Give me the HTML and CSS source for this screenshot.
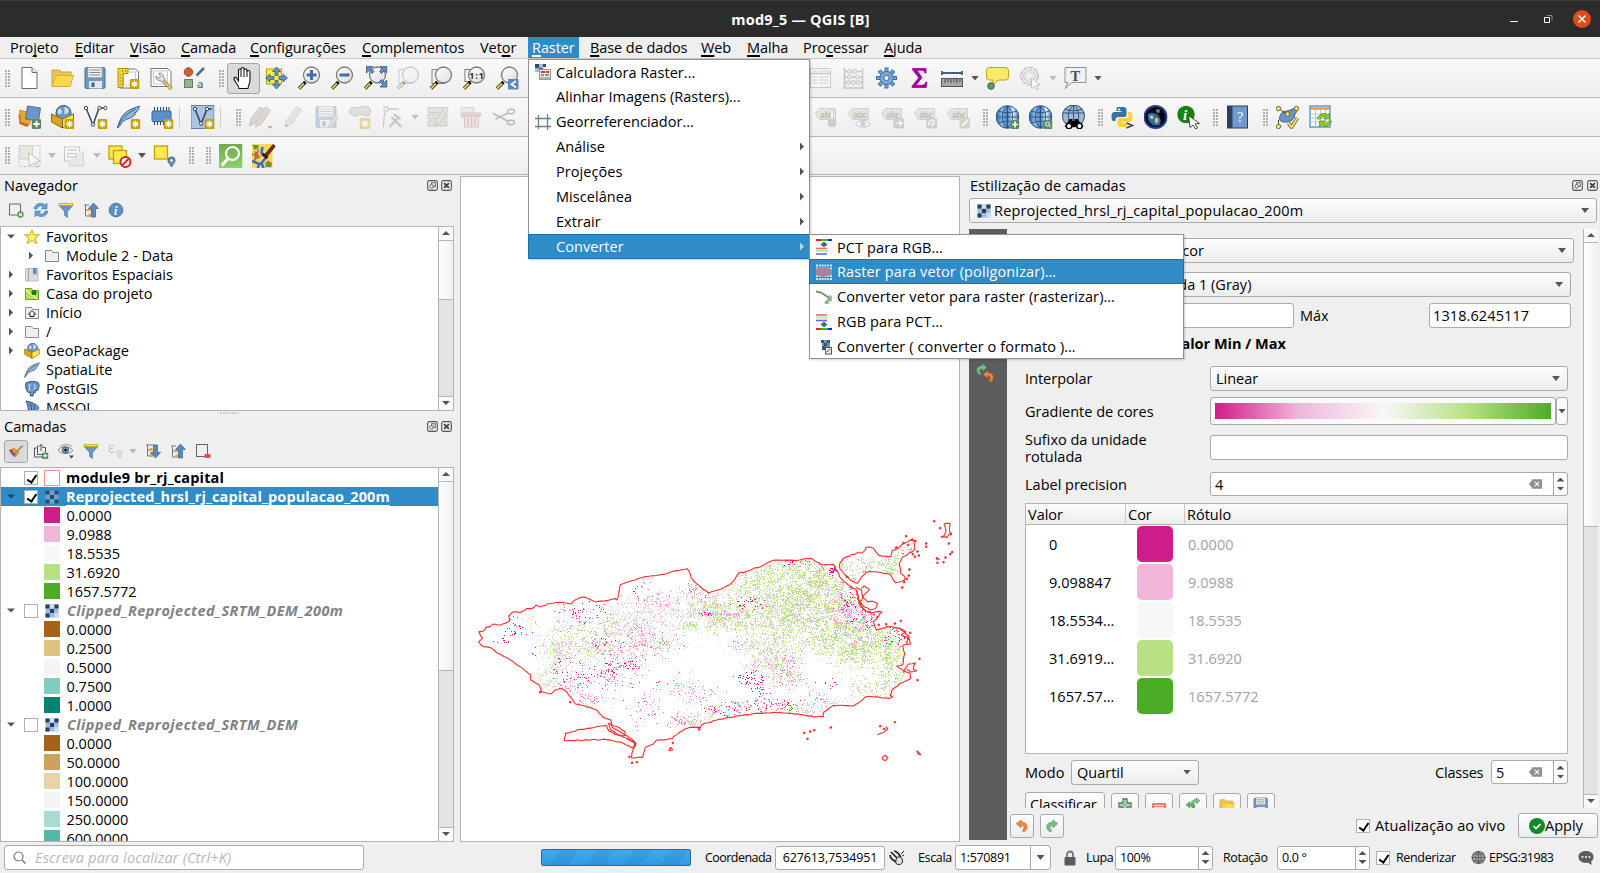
FILE: index.html
```html
<!DOCTYPE html>
<html lang="pt-BR">
<head>
<meta charset="utf-8">
<title>mod9_5 — QGIS [B]</title>
<link rel="stylesheet" href="styles.css">
</head>
<body>
<svg class="defs" width="0" height="0">
  <defs>
    <linearGradient id="glass" x1="0" y1="0" x2="1" y2="1"><stop offset="0" stop-color="#fff"/><stop offset="1" stop-color="#ddd"/></linearGradient>
    <linearGradient id="globeg"><stop offset="0" stop-color="#2a66a8"/><stop offset=".25" stop-color="#8fbcea"/><stop offset=".5" stop-color="#3f7fc4"/><stop offset=".75" stop-color="#e8f1fb"/><stop offset="1" stop-color="#3a6ea8"/></linearGradient>
    <linearGradient id="greeng" x1="0" y1="0" x2="0" y2="1"><stop offset="0" stop-color="#6fa84f"/><stop offset="1" stop-color="#93cf6b"/></linearGradient>
    <symbol id="star" viewBox="0 0 10 10"><rect width="10" height="10" rx="1.5" fill="#c4a000"/><path d="M5 1.5v7M1.5 5h7M2.6 2.6l4.8 4.8M7.4 2.6L2.6 7.4" stroke="#fff" stroke-width="1.2"/></symbol>
    <symbol id="plusbadge" viewBox="0 0 10 10"><rect width="10" height="10" rx="2" fill="#5a8c5a"/><path d="M5 1.8v6.4M1.8 5h6.4" stroke="#fff" stroke-width="1.8"/></symbol>
    <symbol id="new" viewBox="0 0 24 24"><path d="M4.500 1.500h10l5 5v16h-15z" fill="#fff" stroke="#6b6b6b"/><path d="M14.500 1.500v5h5" fill="#eee" stroke="#6b6b6b"/></symbol>
    <symbol id="open" viewBox="0 0 24 24"><path d="M1.500 20.500v-16.500h7l2 2h10v4" fill="#ecc84c" stroke="#c9a43a"/><path d="M1.500 20.500l4-11h17.500l-3.500 11z" fill="#fcd94f" stroke="#d9ac3b"/></symbol>
    <symbol id="save" viewBox="0 0 24 24"><rect x="1.500" y="1.500" width="20" height="21" rx="1.500" fill="#6d97c4" stroke="#4b6f96"/><rect x="4.500" y="1.500" width="14" height="10" fill="#f2f2f2" stroke="#999" stroke-width=".6"/><path d="M6 4h11M6 6.500h11M6 9h11" stroke="#888"/><rect x="5.500" y="15" width="13" height="7.500" fill="#e6e6e6"/><rect x="8" y="16.500" width="3" height="4.500" fill="#3e638c"/></symbol>
    <symbol id="layout" viewBox="0 0 24 24"><path d="M3 3h16l3 3v16h-19z" fill="#fff" stroke="#777"/><rect x="7" y="6" width="12" height="13" fill="none" stroke="#b7c9ee"/><path d="M1.500 2.500h10v5h-5v14h-5z" fill="#f3d44c" stroke="#b39000"/><path d="M3 9h2M3 12h2M3 15h2M3 18h2M6 4v2M9 4v2" stroke="#b39000"/><use href="#star" x="13" y="13" width="10" height="10"/></symbol>
    <symbol id="manager" viewBox="0 0 24 24"><path d="M1.500 2.500h17l3 3v15h-20z" fill="#fff" stroke="#777"/><rect x="4" y="5" width="14" height="13" fill="none" stroke="#b7c9ee"/><path d="M14 15l8 8" stroke="#7d7040" stroke-width="3.400"/><path d="M14 15l8 8" stroke="#f0cf58" stroke-width="2"/><path d="M9 7.500c2-1 5 0 5 3l1.500 3-2.500 2.500-3-1.500c-3 0-4-2.500-3.500-4.500l2.500 2 2-1.500z" fill="#ddd" stroke="#777" stroke-width=".8"/></symbol>
    <symbol id="style" viewBox="0 0 24 24"><circle cx="6" cy="6" r="4.200" fill="#cc5f34" stroke="#a14823"/><path d="M14 9.500l7.500-7.500" stroke="#48719e" stroke-width="2.600"/><rect x="2" y="13.500" width="8" height="8" fill="#8fb58f" stroke="#5f8560"/><text x="14.500" y="22" font-size="11.500" fill="#555" font-family="Noto Sans">a</text></symbol>
    <symbol id="hand" viewBox="0 0 24 24"><path d="M7.500 22.500c0-3-4-6-5-9.500-.3-2 2-2.200 2.800-.5l1.700 2.500v-10.500c0-2 2.500-2 2.500 0v-1.500c0-2 3-2 3 0v1c.2-1.700 3-1.500 3 .5v1c.4-1.500 3-1.300 3 .8v7.200c0 4-1.500 5-2 9z" fill="#fff" stroke="#111" stroke-width="1.100"/><path d="M9.500 4.500v6.500M12.500 4v7M15.500 5v6" stroke="#111"/></symbol>
    <symbol id="pan" viewBox="0 0 24 24"><rect x="2" y="3" width="15" height="15" fill="#fce94f" stroke="#c4a000"/><path d="M12 1l4 4.500h-2.500v4h-3v-4h-2.500zM12 23l4-4.500h-2.500v-4h-3v4h-2.500zM1 12l4.500-4v2.500h4v3h-4v2.500zM23 12l-4.500-4v2.500h-4v3h4v2.500z" fill="#6493c6" stroke="#355f8d" stroke-width=".8"/></symbol>
    <symbol id="lens" viewBox="0 0 24 24"><path d="M8 16l-6.500 6.500" stroke="#000" stroke-width="3.200"/><path d="M6.500 17.500l-5 5" stroke="#f4cf3d" stroke-width="2"/><circle cx="14" cy="9" r="8" fill="url(#glass)" stroke="#7a7a7a" stroke-width="1.300"/></symbol>
    <symbol id="zin" viewBox="0 0 24 24"><use href="#lens"/><path d="M14 4v10M9 9h10" stroke="#3f6fa3" stroke-width="3"/></symbol>
    <symbol id="zout" viewBox="0 0 24 24"><use href="#lens"/><path d="M9 9h10" stroke="#3f6fa3" stroke-width="3"/></symbol>
    <symbol id="zfull" viewBox="0 0 24 24"><use href="#lens"/><path d="M3 0h7l-2.500 2.500 3 3-2 2-3-3-2.500 2.500zM23.500 0v7l-2.500-2.500-3 3-2-2 3-3-2.500-2.500zM23.500 21h-7l2.500-2.500-3-3 2-2 3 3 2.500-2.500z" fill="#5c8cc0" stroke="#3a648f" stroke-width=".9"/></symbol>
    <symbol id="zlayer" viewBox="0 0 24 24"><rect x="2.500" y="3.500" width="13" height="14" fill="#f0f0e4" stroke="#888"/><use href="#lens"/></symbol>
    <symbol id="z11" viewBox="0 0 24 24"><rect x="2.500" y="3.500" width="9" height="12" fill="#fff" stroke="#777"/><use href="#lens"/><text x="6.500" y="12.500" font-size="9.500" font-weight="bold" fill="#333" font-family="Noto Sans" textLength="15">1:1</text></symbol>
    <symbol id="zlast" viewBox="0 0 24 24"><use href="#lens"/><rect x="12.500" y="13" width="10.500" height="10.500" fill="#5c88bb"/><path d="M20.500 15l-4.500 3.300 4.500 3.300" fill="none" stroke="#fff" stroke-width="1.800"/></symbol>
    <symbol id="table" viewBox="0 0 24 24"><rect x="2" y="2.500" width="20" height="19" fill="#fff" stroke="#777"/><path d="M2 7.500h20" stroke="#678" stroke-width="1.600"/><path d="M4 5h5M11 5h9M4 11h5M11 11h9M4 14h5M11 14h9M4 17h5M11 17h9" stroke="#888"/></symbol>
    <symbol id="abacus" viewBox="0 0 24 24"><path d="M3 2v20M21 2v20M3 5.500h18M3 11h18M3 16.500h18M1 22h22" stroke="#777" stroke-width="1.600"/><g fill="#ddd" stroke="#777"><circle cx="8" cy="5.500" r="2"/><circle cx="13" cy="5.500" r="2"/><circle cx="8" cy="11" r="2"/><circle cx="16" cy="11" r="2"/><circle cx="7" cy="16.500" r="2"/><circle cx="12" cy="16.500" r="2"/><circle cx="17" cy="16.500" r="2"/></g></symbol>
    <symbol id="gear" viewBox="0 0 24 24"><path d="M12 1.500v21M1.500 12h21M4.600 4.600l14.800 14.800M19.400 4.600l-14.800 14.800" stroke="#3b6ea5" stroke-width="4"/><path d="M12 2.500v19M2.500 12h19M5.300 5.300l13.400 13.400M18.700 5.300l-13.400 13.400" stroke="#7aa6d8" stroke-width="2.200"/><circle cx="12" cy="12" r="6.600" fill="#7aa6d8" stroke="#3b6ea5"/><circle cx="12" cy="12" r="2.600" fill="#f3f3f3" stroke="#3b6ea5"/></symbol>
    <symbol id="sigma" viewBox="0 0 24 24"><path d="M5 2.500h13.500v4.500h-1.200c-.5-2-1.200-2.700-3.500-2.700h-4.300l5 7.200-6 7.800h5.500c2.600 0 3.500-.8 4.200-3h1.300l-.8 5.200h-14.200v-1.300l6.800-8.500-6.300-8z" fill="#a2009c" stroke="#a2009c" stroke-width=".8"/></symbol>
    <symbol id="ruler" viewBox="0 0 24 24"><path d="M1.500 7h20M1.500 5v4M21.500 5v4" stroke="#3f6184" stroke-width="1.800"/><rect x="1" y="12.500" width="21" height="8" fill="#a6a6a6" stroke="#555"/><path d="M4.500 13v4M7.500 13v3M10.500 13v4M13.500 13v3M16.500 13v4M19.500 13v3" stroke="#444"/></symbol>
    <symbol id="tip" viewBox="0 0 24 24"><path d="M4 1.500h16q3 0 3 3v6.500q0 3-3 3h-7.500l-6 6 1-6h-3.500q-3 0-3-3v-6.500q0-3 3-3z" fill="#fdea6a" stroke="#c4a21a"/><circle cx="5.500" cy="20" r="3.300" fill="#5f9c5c" stroke="#3d6b3c"/></symbol>
    <symbol id="action" viewBox="0 0 24 24"><circle cx="11" cy="10" r="8.500" fill="none" stroke="#777" stroke-width="2" stroke-dasharray="4.500 1"/><circle cx="11" cy="10" r="6" fill="#ccc" stroke="#777"/><path d="M9 7l6 3-6 3z" fill="#fff"/><path d="M13 12l9 7-4 .5 2 3.500-2 1-2-3.500-3 2z" fill="#fff" stroke="#666"/></symbol>
    <symbol id="textann" viewBox="0 0 24 24"><path d="M1.500 1.500h21v15h-14l-7 6 3-6h-3z" fill="#edf1f5" stroke="#8a949c"/><text x="7" y="14.500" font-size="14.500" font-weight="bold" fill="#4d4d4d" font-family="Liberation Serif">T</text></symbol>
    <symbol id="dsm" viewBox="0 0 24 24"><path d="M1 9l12 3-3 10-8-3z" fill="#cd5c2b"/><path d="M2 5l12 3-2 12-9-3z" fill="#e7a72c" stroke="#b97a15" stroke-width=".6"/><path d="M10 1l13 2-2 13-13-2z" fill="#6c96c8" stroke="#47719d"/><use href="#plusbadge" x="14" y="14" width="10" height="10"/></symbol>
    <symbol id="gpkg" viewBox="0 0 24 24"><circle cx="13" cy="8" r="7.500" fill="#6b97c8" stroke="#2e5078"/><path d="M8 4c3-1 4 2 3 4s-3 1-4 0M14 2c3 0 5 3 4 5s-3 1-4 3" fill="#c9dbef"/><path d="M1 9l11 5v9l-11-6z" fill="#d8a818" stroke="#8b6a00"/><path d="M12 14l11-5v8l-11 6z" fill="#fce94f" stroke="#8b6a00"/></symbol>
    <symbol id="gpkgn" viewBox="0 0 24 24"><use href="#gpkg"/><use href="#star" x="14" y="14" width="10" height="10"/></symbol>
    <symbol id="vlayer" viewBox="0 0 24 24"><path d="M2.500 3l7 17 6-17h6" fill="none" stroke="#34495e" stroke-width="1.500"/><g fill="#fff" stroke="#34495e"><circle cx="2.500" cy="3" r="1.700"/><circle cx="16" cy="3" r="1.700"/><circle cx="22" cy="3" r="1.700"/><circle cx="9.500" cy="19.500" r="1.700"/></g><use href="#star" x="14" y="14" width="10" height="10"/></symbol>
    <symbol id="feather" viewBox="0 0 24 24"><path d="M1 23c2-7 4-14 12-18 4-2 7-3 10-4-1 3-1 4-3 6l-2 1 1 1c-2 3-5 4-8 5-3 1-6 3-7 6z" fill="#8fb3dc" stroke="#3d6289"/><path d="M1 23c3-8 8-14 18-19" fill="none" stroke="#3d6289"/></symbol>
    <symbol id="feathern" viewBox="0 0 24 24"><use href="#feather"/><use href="#star" x="14" y="14" width="10" height="10"/></symbol>
    <symbol id="chip" viewBox="0 0 24 24"><path d="M5 2v18M8 2v18M11 2v18M14 2v18M17 2v18M19.500 2v18" stroke="#34495e" stroke-width="1.100"/><rect x="2.500" y="6" width="19" height="10.500" rx="1" fill="#5e8fc9" stroke="#3b6493"/><use href="#star" x="14" y="14" width="10" height="10"/></symbol>
    <symbol id="virt" viewBox="0 0 24 24"><rect x=".5" y=".5" width="23" height="23" fill="#aac4e2" stroke="#5d82ad"/><path d="M4.500 4l6 15 6-15h5" fill="none" stroke="#34495e" stroke-width="1.600"/><g fill="#fff" stroke="#34495e"><circle cx="4.500" cy="4" r="1.700"/><circle cx="16.500" cy="4" r="1.700"/><circle cx="10.500" cy="18.500" r="1.700"/></g><use href="#star" x="14" y="14" width="10" height="10"/></symbol>
    <symbol id="pencil" viewBox="0 0 24 24"><path d="M4 22l1-6 10-14 5 3-10 14z" fill="#d8d4c8" stroke="#888"/><path d="M8 17l9-13" stroke="#999"/><path d="M4 22l.5-3 2 1.500z" fill="#333"/></symbol>
    <symbol id="pencils" viewBox="0 0 24 24"><path d="M1 21l1-6 9-13 5 2-9 14z" fill="#a5a09a" stroke="#777"/><path d="M7 22l1-6 9-14 5 3-9 14z" fill="#c09a92" stroke="#777"/><path d="M19 21h5l-2.500 3z" fill="#333"/></symbol>
    <symbol id="savepen" viewBox="0 0 24 24"><use href="#save"/><path d="M14 23l1-4 6-9 3 2-6 9z" fill="#c9b9ac" stroke="#888"/></symbol>
    <symbol id="blob" viewBox="0 0 24 24"><path d="M2 5c3-5 8-1 12-3s9-1 9 4-4 6-8 4-4 2-8 1-6-3-5-6z" fill="#b8bcb4" stroke="#777"/><use href="#star" x="12" y="13" width="11" height="11"/></symbol>
    <symbol id="vertex" viewBox="0 0 24 24"><path d="M3 22c0-9 1-14 3-18h12" fill="none" stroke="#777" stroke-width="1.300"/><rect x="3.500" y="2" width="4" height="4" fill="#fff" stroke="#777"/><path d="M9 22l9-10M11 12l10 10M13 9l7 5" stroke="#777" stroke-width="2.300"/></symbol>
    <symbol id="multi" viewBox="0 0 24 24"><path d="M2.500 2.500h19v5h-19zM2.500 9h19v5h-19zM2.500 16h19v5h-19z" fill="#c9c39b" stroke="#888"/><path d="M10 21l1-6 9-13 3 2-9 14z" fill="#ccc" stroke="#777"/></symbol>
    <symbol id="trash" viewBox="0 0 24 24"><path d="M2.500 2.500h13v10h-13z" fill="#ddd6bb" stroke="#999"/><path d="M4 8h18v3h-18z" fill="#c9a0a0" stroke="#a06a6a"/><path d="M6 11.500h14v10.500h-14z" fill="#e6cfcf" stroke="#a06a6a"/><path d="M9.500 13v7M13 13v7M16.500 13v7" stroke="#a06a6a" stroke-width="1.500"/></symbol>
    <symbol id="scissors" viewBox="0 0 24 24"><path d="M1 8l15 8M4 14l13-6" stroke="#555" stroke-width="1.800"/><ellipse cx="19.500" cy="6.500" rx="3.500" ry="2.300" fill="none" stroke="#555" stroke-width="1.500"/><ellipse cx="19.500" cy="17.500" rx="3.500" ry="2.300" fill="none" stroke="#555" stroke-width="1.500"/></symbol>
    <symbol id="tag" viewBox="0 0 24 24"><path d="M1 8.500l4-5h16v11h-16z" fill="#cdc9a9" stroke="#888"/><text x="5.500" y="12.500" font-size="8.500" font-weight="bold" fill="#555" font-family="Noto Sans" textLength="14">abc</text></symbol>
    <symbol id="tagpin" viewBox="0 0 24 24"><use href="#tag"/><path d="M16 5h3v11h-3z" fill="#fff" stroke="#888"/><circle cx="17.500" cy="18" r="4" fill="#a87c82" stroke="#888"/></symbol>
    <symbol id="tageye" viewBox="0 0 24 24"><use href="#tag"/><path d="M8 19c3-5 12-5 15 0-3 4-12 4-15 0z" fill="#fff" stroke="#666"/><circle cx="15.500" cy="18.500" r="2.500" fill="#888"/></symbol>
    <symbol id="tagmove" viewBox="0 0 24 24"><use href="#tag"/><rect x="13" y="13" width="10.500" height="10.500" rx="1" fill="#8a8f8a"/><path d="M15 18.300h6M18.500 15.500l3 2.800-3 2.800" fill="none" stroke="#fff" stroke-width="1.500"/></symbol>
    <symbol id="tagrot" viewBox="0 0 24 24"><use href="#tag"/><rect x="13" y="13" width="10.500" height="10.500" rx="1" fill="#8a8f8a"/><path d="M16 20.500c-2-4 3-7 5-4M19 21.500v-3h3" fill="none" stroke="#fff" stroke-width="1.500"/></symbol>
    <symbol id="tagedit" viewBox="0 0 24 24"><use href="#tag"/><rect x="13" y="13" width="10.500" height="10.500" rx="1" fill="#a39c78"/><path d="M15.500 21l6-6" stroke="#fff" stroke-width="2"/></symbol>
    <symbol id="globe" viewBox="0 0 24 24"><circle cx="12" cy="12" r="11.300" fill="url(#globeg)" stroke="#28507f"/><path d="M12 1v22M1 12h22M3 6q9 3.500 18 0M3 18q9-3.500 18 0M12 1c-7 6-7 16 0 22M12 1c7 6 7 16 0 22" fill="none" stroke="#2b4f78" stroke-width=".9"/></symbol>
    <symbol id="globeadd" viewBox="0 0 24 24"><use href="#globe"/><use href="#plusbadge" x="15" y="15" width="9" height="9"/></symbol>
    <symbol id="globesearch" viewBox="0 0 24 24"><use href="#globe"/><rect x="15" y="15" width="9" height="9" rx="1" fill="#5a8c5a"/><circle cx="19" cy="19" r="2" fill="none" stroke="#fff"/><path d="M20.500 20.500l2 2" stroke="#fff"/></symbol>
    <symbol id="bino" viewBox="0 0 24 24"><circle cx="12" cy="11" r="11" fill="#9cbbd8" stroke="#28507f"/><path d="M12 0v20M1 8h22M3 4q9 3.500 18 0M12 0c-7 6-7 16 0 22M12 0c7 6 7 16 0 22" fill="none" stroke="#32557b"/><path d="M3 22l5-8h3v2h2v-2h3l6 8z" fill="#000"/><circle cx="7.500" cy="21" r="2.700" fill="#fff" stroke="#000" stroke-width="1.500"/><circle cx="18" cy="21" r="2.700" fill="#fff" stroke="#000" stroke-width="1.500"/></symbol>
    <symbol id="python" viewBox="0 0 24 24"><path d="M7 2h6q3 0 3 3v5q0 2-2 2h-6q-3 0-3 3v1h-2q-2 0-2-4.500t3-4.500h7v-1h-5v-2q0-2 1-2z" fill="#3772a4"/><path d="M17 7h2q3 0 3 5t-3 5h-7v1h5v2q0 2-3 2h-4q-3 0-3-3v-4q0-2 2-2h6q3 0 3-3z" fill="#ffd43b"/><circle cx="8.500" cy="4.500" r="1" fill="#fff"/><path d="M16 18l6 2.500-6 2.500" fill="none" stroke="#444" stroke-width="1.500"/></symbol>
    <symbol id="earth" viewBox="0 0 24 24"><circle cx="12" cy="12" r="11" fill="#05070f" stroke="#28388c" stroke-width="2"/><path d="M4 11c0-3 3-4 6-3 5 1 8 5 7 11-2 2-5 2-8 1-3-2-5-5-5-9z" fill="#2d6aa5"/><path d="M6 11c2-2 5 0 4 2s-3 2-4-2zM12 13c3-1 4 3 2 5s-4-3-2-5z" fill="#c9c66b"/><circle cx="14.500" cy="6" r="2" fill="#777"/></symbol>
    <symbol id="infocur" viewBox="0 0 24 24"><circle cx="9.500" cy="9.500" r="8.700" fill="#118411"/><text x="6.500" y="15" font-size="15" font-style="italic" font-weight="bold" fill="#fff" font-family="Liberation Serif">i</text><path d="M12 10.500l11 8-4.500.5 2.500 4-2 1-2.500-4-3 2.500z" fill="#fff" stroke="#333" stroke-width=".9"/></symbol>
    <symbol id="book" viewBox="0 0 24 24"><rect x="2" y="1" width="20" height="22" fill="#6d9ad0" stroke="#2c3e50"/><rect x="2" y="1" width="5" height="22" fill="#2f4256"/><text x="11.500" y="17" font-size="14" fill="#fff" font-family="Liberation Serif">?</text></symbol>
    <symbol id="topo" viewBox="0 0 24 24"><path d="M4 13c1-5 3-6 7-7 4 0 8-4 11-3 1 3-3 5-3 8s-4 6-8 6-7 0-7-4z" fill="#6b93c4" stroke="#3d5d87"/><g fill="#fce94f" stroke="#6b6b3a"><circle cx="3" cy="3.500" r="2.200"/><circle cx="21" cy="3.500" r="2.200"/><circle cx="12" cy="9" r="2.200"/><circle cx="3" cy="21.500" r="2.200"/></g><path d="M3 19v-4M5 5l5 3" stroke="#444"/><path d="M13 18l3 4 6-9" fill="none" stroke="#555" stroke-width="3.500"/><path d="M13 18l3 4 6-9" fill="none" stroke="#fce94f" stroke-width="2"/></symbol>
    <symbol id="reload" viewBox="0 0 24 24"><rect x="1.500" y="1" width="20" height="21" fill="#fff" stroke="#5e9ec4" stroke-width="1.500"/><rect x="2.500" y="2" width="18" height="3" fill="#f0a644"/><path d="M2 9h19M2 13h19M2 17h19M7 5v16M12 5v16M17 5v16" stroke="#a8cbe0"/><path d="M9 14c1-5 7-7 10-4l2-2v6h-6l2-2c-2-1-4-1-5 2zM23 16c-1 5-7 7-10 4l-2 2v-6h6l-2 2c2 1 4 1 5-2z" fill="#8ccf24" stroke="#4e8c10" stroke-width=".7"/></symbol>
    <symbol id="selrect" viewBox="0 0 24 24"><rect x="1.500" y="1.500" width="21" height="21" fill="none" stroke="#666" stroke-dasharray="2 1.500"/><rect x="2" y="2" width="13" height="13" fill="#d4d0b0" stroke="#999"/><path d="M11 8.500l12 9-5 .5 3 4.500-2 1-3-4.500-4 3z" fill="#fff" stroke="#666"/></symbol>
    <symbol id="selform" viewBox="0 0 24 24"><rect x="2" y="3" width="15" height="14" fill="#fff" stroke="#777"/><path d="M17 8h4v14h-14v-5" fill="#dad6bb" stroke="#999"/><rect x="5" y="9.500" width="9" height="3.500" fill="#fff" stroke="#777"/><path d="M5 6h9" stroke="#777" stroke-width="1.300"/></symbol>
    <symbol id="desel" viewBox="0 0 24 24"><rect x="1.500" y="2" width="13" height="13" fill="#fce94f" stroke="#c4a000" stroke-width="1.300"/><rect x="6" y="6.500" width="13" height="13" fill="#fce94f" stroke="#c4a000" stroke-width="1.300"/><circle cx="18" cy="18" r="5" fill="#fff" stroke="#d92020" stroke-width="2"/><path d="M15 21l6-6" stroke="#d92020" stroke-width="1.800"/></symbol>
    <symbol id="selloc" viewBox="0 0 24 24"><rect x="2" y="2" width="13" height="13" fill="#fce94f" stroke="#c4a000" stroke-width="1.300"/><path d="M19 23c-1-3-3.500-4-3.500-6.500a3.500 3.500 0 0 1 7 0c0 2.500-2.500 3.500-3.500 6.500z" fill="#6f8fa8" stroke="#46637b"/><circle cx="19" cy="16.500" r="1.200" fill="#fff"/></symbol>
    <symbol id="gsearch" viewBox="0 0 24 24"><rect width="24" height="24" fill="url(#greeng)"/><circle cx="14" cy="9.500" r="6.500" fill="none" stroke="#fff" stroke-width="2.200"/><path d="M9.500 14.500l-6 7" stroke="#fff" stroke-width="3"/></symbol>
    <symbol id="osm" viewBox="0 0 24 24"><rect width="21" height="24" fill="#f9d95a"/><path d="M1 1h6v3l-4 2zM14 18h6v5h-6zM3 7l4 2v6h-4z" fill="#4f9e4b"/><path d="M11 3l-1 6 5 4-5 6 2 5M0 17l8 3-2 4" fill="none" stroke="#3569d0" stroke-width="2.500"/><path d="M0 10l9 3M7 5l-4 12M16 17l4 4" stroke="#df5848" stroke-width="1.800"/><path d="M14 12l9-11" stroke="#6b2d12" stroke-width="3.600"/><path d="M11 10l5 4" stroke="#401a08" stroke-width="3"/></symbol>
    <symbol id="addl" viewBox="0 0 16 16"><path d="M11 13h-9.500v-11h11v8" fill="none" stroke="#666"/><circle cx="12.500" cy="12.500" r="2.500" fill="#cfe3cf" stroke="#5a8c5a" stroke-width="1.300"/></symbol>
    <symbol id="refresh" viewBox="0 0 16 16"><path d="M1 7c1-6 8-7 11-4l2-2v6h-6l2-2c-2-2-5-1-6 2zM15 9c-1 6-8 7-11 4l-2 2v-6h6l-2 2c2 2 5 1 6-2z" fill="#6a9bd2" stroke="#3b6ea5" stroke-width=".5"/></symbol>
    <symbol id="funnel" viewBox="0 0 16 16"><path d="M1 3.500h14l-5.500 6v6l-3-2v-4z" fill="#6a95c5" stroke="#4a74a3" stroke-width=".6"/><path d="M1 1.500h14v2h-14z" fill="#fce94f" stroke="#c4a000" stroke-width=".7"/></symbol>
    <symbol id="collapse" viewBox="0 0 16 16"><path d="M1 3h5M2.500 3v11h5M2.500 8h5" fill="none" stroke="#777"/><rect x="5.500" y="6" width="3" height="3" fill="#f7a035"/><rect x="5.500" y="11.500" width="3" height="3" fill="#f7a035"/><path d="M10.500 1l5 5.500h-3v8.500h-4v-8.500h-3z" fill="#5c88bb" stroke="#3a648f" stroke-width=".7"/></symbol>
    <symbol id="expand" viewBox="0 0 16 16"><path d="M1 2h8M2.500 2v11h5M2.500 7h5" fill="none" stroke="#777"/><rect x="4.500" y="5" width="3" height="3" fill="#f7a035"/><rect x="4.500" y="11" width="3" height="3" fill="#f7a035"/><path d="M10.500 15l5-5.500h-3v-7.500h-4v7.500h-3z" fill="#5c88bb" stroke="#3a648f" stroke-width=".7"/></symbol>
    <symbol id="infob" viewBox="0 0 16 16"><circle cx="8" cy="8" r="6.800" fill="#5d8fc8" stroke="#4477ae"/><text x="6" y="12.500" font-size="12" font-style="italic" font-weight="bold" fill="#fff" font-family="Liberation Serif">i</text></symbol>
    <symbol id="float" viewBox="0 0 12 12"><rect x=".7" y=".7" width="10.600" height="10.600" rx="2" fill="none" stroke="#555" stroke-width="1.200"/><rect x="5" y="3" width="4" height="4" fill="none" stroke="#555"/><circle cx="5" cy="7" r="2" fill="#eee" stroke="#555"/></symbol>
    <symbol id="closex" viewBox="0 0 12 12"><rect x=".7" y=".7" width="10.600" height="10.600" rx="2" fill="none" stroke="#555" stroke-width="1.200"/><path d="M3.300 3.300l5.400 5.400M8.700 3.300l-5.400 5.400" stroke="#444" stroke-width="2"/></symbol>
    <symbol id="fav" viewBox="0 0 16 16"><path d="M8 .8l2.100 5h5.300l-4.300 3.400 1.600 5.500-4.700-3.300-4.700 3.300 1.600-5.500-4.300-3.400h5.300z" fill="#fdf25c" stroke="#d3a21c"/></symbol>
    <symbol id="folder" viewBox="0 0 16 16"><path d="M1.500 13.500v-11h6l1.500 2h5.500v9z" fill="#efefef" stroke="#8a8a8a"/></symbol>
    <symbol id="bookmark" viewBox="0 0 16 16"><path d="M1.500 1.500h12.500v12.500h-12.500z" fill="#dcdcdc" stroke="#bbb"/><path d="M4.500 1v13" stroke="#aaa"/><path d="M9 1h3.500v7l-1.700-1.500-1.800 1.500z" fill="#5c88bb"/></symbol>
    <symbol id="projhome" viewBox="0 0 16 16"><path d="M1.500 13.500v-11h6l1.500 2h5.500v9z" fill="#b7e04a" stroke="#779c2a"/><path d="M2 4l11 9" stroke="#f4f8d0" stroke-width="1.500"/><circle cx="10" cy="6.500" r="2.600" fill="#148014"/></symbol>
    <symbol id="home" viewBox="0 0 16 16"><path d="M1.500 13.500v-11h6l1.500 2h5.500v9z" fill="#efefef" stroke="#8a8a8a"/><path d="M4.500 9l3.500-3.500 3.500 3.500h-1.500v2.500h-4v-2.500z" fill="#fff" stroke="#222"/></symbol>
    <symbol id="elephant" viewBox="0 0 16 16"><path d="M2 2c3-2 9-2 12-.5 2 2 1 6-.5 8h-2.500l.5 2-2 .5-.5 3h-2.500l-.5-4-2 .5c-2-2-3-7-2-9.500z" fill="#6b97c8" stroke="#33557c"/><path d="M6 3c-1 3 0 5-1 7M10 3c2 2 1 4 0 6" fill="none" stroke="#dce8f5"/></symbol>
    <symbol id="mssql" viewBox="0 0 16 16"><path d="M2 1c5 1 11 3 13 7-2 2-3 4-4 7h-7c1-5 0-10-2-14z" fill="#6b97c8" stroke="#33557c"/><path d="M6 3c2 4 2 8 1 12M10 5c1 3 1 6 0 9" fill="none" stroke="#33557c"/></symbol>
    <symbol id="brush" viewBox="0 0 24 24"><path d="M2 11l7-3 8 6-6 7z" fill="#e7952a" stroke="#9d5f12" stroke-width=".6"/><path d="M2 11l4-2 2 9-3-1z" fill="#d33"/><path d="M6 18l3-5 3 3-2 5z" fill="#47b"/><path d="M13 13l9-9" stroke="#b98d4a" stroke-width="3"/></symbol>
    <symbol id="groupadd" viewBox="0 0 16 16"><path d="M3.500 5h-2v9h8M5.500 3h-1v8.500h8v-7h-3M8 8V1.500M6 3.500l2-2 2 2" fill="none" stroke="#555"/><use href="#plusbadge" x="9" y="9.500" width="6.500" height="6.500"/></symbol>
    <symbol id="eye" viewBox="0 0 16 16"><path d="M0 7.500c3-5 11-5 15 0-4 4-11 4-15 0z" fill="#eee" stroke="#888"/><circle cx="7.500" cy="7" r="3.100" fill="#7b9ec5" stroke="#456"/><circle cx="7.500" cy="7" r="1.300" fill="#111"/><path d="M2 3.500c3-2.500 9-2.500 12 0" fill="none" stroke="#999"/><path d="M11 12.500h5l-2.500 3z" fill="#444"/></symbol>
    <symbol id="expr" viewBox="0 0 16 16"><text x="0" y="10" font-size="14" fill="#777" font-family="Noto Sans">ε</text><path d="M8 8h7l-2 3v4h-3v-4z" fill="#ccc" stroke="#999"/></symbol>
    <symbol id="removel" viewBox="0 0 16 16"><rect x="1.500" y="1.500" width="11" height="12" fill="none" stroke="#666"/><rect x="9.500" y="11" width="6" height="4" rx="1" fill="#ef4a4a"/></symbol>
    <symbol id="raster" viewBox="0 0 16 16"><rect x="1.500" y="1.500" width="13" height="13" fill="#9dbbe0"/><path d="M1.500 1.500h4v4h-4zM10.500 1.500h4v4h-4zM6 6h4v4h-4zM1.500 10.500h4v4h-4z" fill="#2c3e50"/><path d="M6 1.500h4v4h-4zM10.500 10h4v4.500h-4z" fill="#cfdff2"/></symbol>
    <symbol id="rastersel" viewBox="0 0 16 16"><rect x="1.500" y="1.500" width="13" height="13" fill="#6ba3d6"/><path d="M1.500 1.500h4v4h-4zM10.500 1.500h4v4h-4zM6 6h4v4h-4zM1.500 10.500h4v4h-4zM10.500 10.500h4v4h-4z" fill="#2a4a68"/></symbol>
    <symbol id="redogreen" viewBox="0 0 16 16"><path d="M9 1l5.500 4.500-5.500 4.500v-2.800c-3 0-4.500 2-2 5.300 1 1.500-.3 2.500-1.500 2-5-3-5-11 3.500-11z" fill="#7fbf86" stroke="#4d8a54" stroke-width=".7"/></symbol>
    <symbol id="undoorange" viewBox="0 0 16 16"><path d="M7 1l-5.500 4.500 5.500 4.500v-2.800c3 0 4.500 2 2 5.300-1 1.500.3 2.500 1.500 2 5-3 5-11-3.500-11z" fill="#ef8742" stroke="#c8601e" stroke-width=".7"/></symbol>
    <symbol id="history" viewBox="0 0 20 20"><use href="#redogreen" x="0" y="0" width="13" height="13"/><use href="#undoorange" x="7" y="7" width="13" height="13"/></symbol>
    <symbol id="calc" viewBox="0 0 16 16"><path d="M0 0h4v4h-4zM4 4h4v4h-4zM8 0h3v3h-3z" fill="#34495e"/><path d="M4 0h4v4h-4zM0 4h4v4h-4z" fill="#9dbbe0"/><rect x="4.500" y="5.500" width="11" height="10" fill="#eee" stroke="#999"/><path d="M6 8h4M11 8h3" stroke="#d33" stroke-width="2"/><path d="M6 11h3M10 11h4" stroke="#4a8c4a" stroke-width="1.500"/><path d="M5 14h10" stroke="#777"/></symbol>
    <symbol id="georef" viewBox="0 0 16 16"><path d="M3.500 1v14M12.500 0v16M0 4.500h16M0 12.500h16" stroke="#6a7f92" stroke-width="1.300"/></symbol>
    <symbol id="pct" viewBox="0 0 16 16"><path d="M0 1h6" stroke="#e22" stroke-width="2"/><path d="M5 1h7" stroke="#2c2" stroke-width="2"/><path d="M12 1h4" stroke="#22e" stroke-width="2"/><path d="M8 2.500l3.500 3-3.500 3-3.500-3z" fill="#456b8c"/><path d="M0 9.500h11" stroke="#f66" stroke-width="1.600"/><path d="M0 12h12" stroke="#aef0a8" stroke-width="2"/><path d="M0 15h11" stroke="#66f" stroke-width="1.600"/></symbol>
    <symbol id="rgb" viewBox="0 0 16 16"><path d="M0 1h11" stroke="#f66" stroke-width="1.600"/><path d="M0 3.500h12" stroke="#aef0a8" stroke-width="2"/><path d="M0 6.500h11" stroke="#66f" stroke-width="1.600"/><path d="M8 7.500l3.500 3-3.500 3-3.500-3z" fill="#456b8c"/><path d="M0 15h6" stroke="#e22" stroke-width="2"/><path d="M5 15h7" stroke="#2c2" stroke-width="2"/><path d="M12 15h4" stroke="#22e" stroke-width="2"/></symbol>
    <symbol id="polyg" viewBox="0 0 16 16"><path d="M0 1.500h16M0 4.500h16M0 12h16M0 15h16" stroke="#dbe4ee" stroke-width="2" stroke-dasharray="2 .8"/><path d="M0 5l4-2 8 1 4 2v5l-6 1-3 1-7-2z" fill="#9a8aa5"/><path d="M0 7.500h16M0 10h16M4 4v8M8 4v8M12 4v8" stroke="#c07a84" stroke-width=".8"/></symbol>
    <symbol id="rasterize" viewBox="0 0 16 16"><path d="M0 2.500l5 1 6 4 3 2-5 5" fill="none" stroke="#6d8f6d" stroke-width="1.800"/><path d="M12 6.500h4v6h-3v2.500h-4v-2h2z" fill="#8db78d" opacity=".8"/></symbol>
    <symbol id="transl" viewBox="0 0 16 16"><rect x="6" y="1" width="8" height="7" fill="#6f92b3"/><path d="M5 1h3v3h-3zM11 1h3v3h-3zM8 4h3v3h-3zM6 7h3v4h-3z" fill="#34566f"/><rect x="9.500" y="8.500" width="6" height="6.500" fill="#e5eaf0" stroke="#555"/><path d="M11 13l3-3" stroke="#456"/></symbol>
  </defs>
</svg>

<header class="titlebar">
  <span class="title">mod9_5 — QGIS [B]</span>
  <div class="winbtns">
    <svg width="10" height="16" viewBox="0 0 10 16"><path d="M1 10.500h8" stroke="#fff"/></svg>
    <svg width="10" height="16" viewBox="0 0 10 16"><path d="M1.500 6.500h5v5h-5z" fill="none" stroke="#fff"/><path d="M4 4.500h5v5" fill="none" stroke="#888"/></svg>
    <svg class="close" width="18" height="18" viewBox="0 0 18 18"><circle cx="9" cy="9" r="9" fill="#e14a1a"/><path d="M5.500 5.500l7 7M12.500 5.500l-7 7" stroke="#fff" stroke-width="1.500"/></svg>
  </div>
</header>

<nav class="menubar">
  <span class="mi w65">Pro<u>j</u>eto</span><span class="mi w55"><u>E</u>ditar</span><span class="mi w51"><u>V</u>isão</span><span class="mi w69"><u>C</u>amada</span><span class="mi w112"><u>C</u>onfigurações</span><span class="mi w118"><u>C</u>omplementos</span><span class="mi w48">Vet<u>o</u>r</span><span class="mi active"><u>R</u>aster</span><span class="mi first w111"><u>B</u>ase de dados</span><span class="mi w46"><u>W</u>eb</span><span class="mi w56"><u>M</u>alha</span><span class="mi w81">Pro<u>c</u>essar</span><span class="mi"><u>A</u>juda</span>
</nav>

<div class="toolbar">
  <i class="grip"></i>
  <svg class="tb"><use href="#new"/></svg><svg class="tb"><use href="#open"/></svg><svg class="tb"><use href="#save"/></svg><svg class="tb"><use href="#layout"/></svg><svg class="tb"><use href="#manager"/></svg><svg class="tb"><use href="#style"/></svg>
  <i class="grip g2"></i>
  <span class="pressed"><svg class="tb"><use href="#hand"/></svg></span><svg class="tb"><use href="#pan"/></svg><svg class="tb"><use href="#zin"/></svg><svg class="tb"><use href="#zout"/></svg><svg class="tb"><use href="#zfull"/></svg><svg class="tb off"><use href="#zlayer"/></svg><svg class="tb"><use href="#zlayer"/></svg><svg class="tb"><use href="#z11"/></svg><svg class="tb"><use href="#zlast"/></svg>
  <i class="gap280"></i>
  <svg class="tb off"><use href="#table"/></svg><svg class="tb off"><use href="#abacus"/></svg><svg class="tb"><use href="#gear"/></svg><svg class="tb"><use href="#sigma"/></svg><svg class="tb"><use href="#ruler"/></svg><i class="dd"></i><svg class="tb"><use href="#tip"/></svg><svg class="tb off"><use href="#action"/></svg><i class="dd off"></i><svg class="tb"><use href="#textann"/></svg><i class="dd"></i>
</div>
<div class="toolbar">
  <i class="grip"></i>
  <svg class="tb"><use href="#dsm"/></svg><svg class="tb"><use href="#gpkgn"/></svg><svg class="tb"><use href="#vlayer"/></svg><svg class="tb"><use href="#feathern"/></svg><svg class="tb"><use href="#chip"/></svg><i class="sep"></i><svg class="tb"><use href="#virt"/></svg><i class="sep"></i>
  <i class="grip g3"></i>
  <svg class="tb off"><use href="#pencils"/></svg><svg class="tb off"><use href="#pencil"/></svg><svg class="tb off"><use href="#savepen"/></svg><svg class="tb off"><use href="#blob"/></svg><svg class="tb off"><use href="#vertex"/></svg><i class="dd off"></i><svg class="tb off"><use href="#multi"/></svg><svg class="tb off"><use href="#trash"/></svg><svg class="tb off"><use href="#scissors"/></svg>
  <i class="gap294"></i>
  <svg class="tb off"><use href="#tagpin"/></svg><svg class="tb off"><use href="#tageye"/></svg><svg class="tb off"><use href="#tagmove"/></svg><svg class="tb off"><use href="#tagrot"/></svg><svg class="tb off"><use href="#tagedit"/></svg>
  <i class="grip g2"></i>
  <svg class="tb"><use href="#globeadd"/></svg><svg class="tb"><use href="#globesearch"/></svg><svg class="tb"><use href="#bino"/></svg>
  <i class="grip g2"></i>
  <svg class="tb"><use href="#python"/></svg><svg class="tb"><use href="#earth"/></svg><svg class="tb"><use href="#infocur"/></svg>
  <i class="grip g2"></i>
  <svg class="tb"><use href="#book"/></svg>
  <i class="grip g3"></i>
  <svg class="tb"><use href="#topo"/></svg><svg class="tb"><use href="#reload"/></svg>
</div>
<div class="toolbar last">
  <i class="grip"></i>
  <svg class="tb off"><use href="#selrect"/></svg><i class="dd off"></i><svg class="tb off"><use href="#selform"/></svg><i class="dd off"></i><svg class="tb"><use href="#desel"/></svg><i class="dd"></i><svg class="tb"><use href="#selloc"/></svg>
  <i class="grip g2"></i><i class="grip g4"></i>
  <svg class="tb"><use href="#gsearch"/></svg><svg class="tb"><use href="#osm"/></svg>
</div>

<main class="main">
  <aside class="left">
    <div class="docktitle"><span>Navegador</span><svg class="db"><use href="#float"/></svg><svg class="db"><use href="#closex"/></svg></div>
    <div class="docktools">
      <svg class="s"><use href="#addl"/></svg><svg class="s"><use href="#refresh"/></svg><svg class="s"><use href="#funnel"/></svg><svg class="s"><use href="#collapse"/></svg><svg class="s"><use href="#infob"/></svg>
    </div>
    <div class="treebox nav">
      <div class="tree">
        <div class="row"><i class="tri down"></i><svg class="s"><use href="#fav"/></svg><span>Favoritos</span></div>
        <div class="row child"><i class="tri"></i><svg class="s"><use href="#folder"/></svg><span>Module 2 - Data</span></div>
        <div class="row"><i class="tri"></i><svg class="s"><use href="#bookmark"/></svg><span>Favoritos Espaciais</span></div>
        <div class="row"><i class="tri"></i><svg class="s"><use href="#projhome"/></svg><span>Casa do projeto</span></div>
        <div class="row"><i class="tri"></i><svg class="s"><use href="#home"/></svg><span>Início</span></div>
        <div class="row"><i class="tri"></i><svg class="s"><use href="#folder"/></svg><span>/</span></div>
        <div class="row"><i class="tri"></i><svg class="s"><use href="#gpkg"/></svg><span>GeoPackage</span></div>
        <div class="row"><i class="tri none"></i><svg class="s"><use href="#feather"/></svg><span>SpatiaLite</span></div>
        <div class="row"><i class="tri none"></i><svg class="s"><use href="#elephant"/></svg><span>PostGIS</span></div>
        <div class="row"><i class="tri none"></i><svg class="s"><use href="#mssql"/></svg><span>MSSQL</span></div>
      </div>
      <div class="scroll"><i class="sb up"></i><i class="thumb h59"></i><i class="trough"></i><i class="sb dn"></i></div>
    </div>
    <div class="splitter"></div>
    <div class="docktitle"><span>Camadas</span><svg class="db"><use href="#float"/></svg><svg class="db"><use href="#closex"/></svg></div>
    <div class="docktools layers">
      <span class="pressed small"><svg class="s"><use href="#brush"/></svg></span><svg class="s"><use href="#groupadd"/></svg><svg class="s"><use href="#eye"/></svg><svg class="s"><use href="#funnel"/></svg><svg class="s off"><use href="#expr"/></svg><i class="dd off"></i><svg class="s"><use href="#expand"/></svg><svg class="s"><use href="#collapse"/></svg><svg class="s"><use href="#removel"/></svg>
    </div>
    <div class="treebox lay">
      <div class="tree">
        <div class="row lr"><i class="tri none"></i><i class="cb on"></i><i class="sw outline"></i><b>module9 br_rj_capital</b></div>
        <div class="row lr sel"><i class="tri down"></i><i class="cb on"></i><svg class="s"><use href="#rastersel"/></svg><b class="ul">Reprojected_hrsl_rj_capital_populacao_200m</b></div>
        <div class="row leg"><i class="sw c-mag"></i><span>0.0000</span></div>
        <div class="row leg"><i class="sw c-pink"></i><span>9.0988</span></div>
        <div class="row leg"><i class="sw c-wht"></i><span>18.5535</span></div>
        <div class="row leg"><i class="sw c-lgr"></i><span>31.6920</span></div>
        <div class="row leg"><i class="sw c-grn"></i><span>1657.5772</span></div>
        <div class="row lr dim"><i class="tri down"></i><i class="cb"></i><svg class="s"><use href="#raster"/></svg><b>Clipped_Reprojected_SRTM_DEM_200m</b></div>
        <div class="row leg"><i class="sw c-br1"></i><span>0.0000</span></div>
        <div class="row leg"><i class="sw c-br2"></i><span>0.2500</span></div>
        <div class="row leg"><i class="sw c-gry"></i><span>0.5000</span></div>
        <div class="row leg"><i class="sw c-tl1"></i><span>0.7500</span></div>
        <div class="row leg"><i class="sw c-tl2"></i><span>1.0000</span></div>
        <div class="row lr dim"><i class="tri down"></i><i class="cb"></i><svg class="s"><use href="#raster"/></svg><b>Clipped_Reprojected_SRTM_DEM</b></div>
        <div class="row leg"><i class="sw c-br1"></i><span>0.0000</span></div>
        <div class="row leg"><i class="sw c-br3"></i><span>50.0000</span></div>
        <div class="row leg"><i class="sw c-br4"></i><span>100.0000</span></div>
        <div class="row leg"><i class="sw c-gry"></i><span>150.0000</span></div>
        <div class="row leg"><i class="sw c-tl3"></i><span>250.0000</span></div>
        <div class="row leg"><i class="sw c-tl4"></i><span>600.0000</span></div>
      </div>
      <div class="scroll"><i class="sb up"></i><i class="thumb h189"></i><i class="trough"></i><i class="sb dn"></i></div>
    </div>
  </aside>

  <section class="mapwrap">
    <svg class="map" viewBox="3 -999 1494 1992">
      <defs><clipPath id="land"><path id="landshape"/></clipPath></defs>
      <g id="cells" clip-path="url(#land)" shape-rendering="crispEdges"></g>
      <g id="coast" fill="none" stroke="#ff2a2a" stroke-width="3.300" stroke-linejoin="round"></g>
    </svg>
  </section>

  <aside class="right">
    <div class="docktitle"><span>Estilização de camadas</span><svg class="db"><use href="#float"/></svg><svg class="db"><use href="#closex"/></svg></div>
    <div class="combo layercombo"><svg class="s"><use href="#raster"/></svg><span>Reprojected_hrsl_rj_capital_populacao_200m</span><i class="car"></i></div>
    <div class="stylebody">
      <div class="dark"><svg width="20" height="20"><use href="#history"/></svg></div>
      <div class="stylecol">
        <div class="scrollrow">
          <div class="form">
            <div class="combo c1"><span>falsa-cor</span><i class="car"></i></div>
            <div class="combo c2"><span>Banda 1 (Gray)</span><i class="car"></i></div>
            <div class="minmax"><div class="inp min"></div><span class="maxl">Máx</span><div class="inp max">1318.6245117</div></div>
            <div class="heading">Valor Min / Max</div>
            <div class="fr f1"><label>Interpolar</label><div class="combo"><span>Linear</span><i class="car"></i></div></div>
            <div class="fr f2"><label>Gradiente de cores</label><div class="ramp"><i></i></div><div class="rampdd"><i class="car"></i></div></div>
            <div class="fr f3"><label>Sufixo da unidade rotulada</label><div class="inp"></div></div>
            <div class="fr f4"><label>Label precision</label><div class="inp spin"><span>4</span><svg class="clr" viewBox="0 0 14 10"><path d="M4 0h10v10h-10l-4-5z" fill="#8f8f8f"/><path d="M6 2.500l5 5M11 2.500l-5 5" stroke="#fff" stroke-width="1.200"/></svg><i class="steps"></i></div></div>
            <div class="table">
              <div class="th"><span class="t1">Valor</span><span class="t2">Cor</span><span class="t3">Rótulo</span></div>
              <div class="tr"><span class="v">0</span><i class="chipc c-mag"></i><span class="l">0.0000</span></div>
              <div class="tr"><span class="v">9.098847</span><i class="chipc c-pink"></i><span class="l">9.0988</span></div>
              <div class="tr"><span class="v">18.5534…</span><i class="chipc c-wht"></i><span class="l">18.5535</span></div>
              <div class="tr"><span class="v">31.6919…</span><i class="chipc c-lgr"></i><span class="l">31.6920</span></div>
              <div class="tr"><span class="v">1657.57…</span><i class="chipc c-grn"></i><span class="l">1657.5772</span></div>
            </div>
            <div class="moderow"><label class="ml">Modo</label><div class="combo mode"><span>Quartil</span><i class="car"></i></div><label class="cl">Classes</label><div class="inp spin cls"><span>5</span><svg class="clr" viewBox="0 0 14 10"><path d="M4 0h10v10h-10l-4-5z" fill="#8f8f8f"/><path d="M6 2.500l5 5M11 2.500l-5 5" stroke="#fff" stroke-width="1.200"/></svg><i class="steps"></i></div></div>
            <div class="btnrow">
              <div class="btn classify">Classificar</div>
              <div class="btn ib"><svg width="14" height="14" viewBox="0 0 14 14"><path d="M5 1h4v4h4v4h-4v4h-4v-4h-4v-4h4z" fill="#fff" stroke="#3f7d44" stroke-width="1.300"/><path d="M7 2v10M2 7h10" stroke="#5a9a5e"/></svg></div>
              <div class="btn ib"><svg width="14" height="14" viewBox="0 0 14 14"><rect x="1" y="6" width="12" height="4.500" fill="#fff" stroke="#e33" stroke-width="1.300"/><path d="M2 8.300h10" stroke="#e55"/></svg></div>
              <div class="btn ib"><svg width="16" height="16"><use href="#redogreen" x="5" y="0" width="11" height="11"/><use href="#undoorange" class="tint" x="0" y="4" width="11" height="11"/></svg></div>
              <div class="btn ib"><svg width="16" height="16"><use href="#open"/></svg></div>
              <div class="btn ib"><svg width="16" height="16"><use href="#save"/></svg></div>
            </div>
          </div>
          <div class="scroll"><i class="sb up"></i><i class="thumb h283"></i><i class="trough"></i><i class="sb dn"></i></div>
        </div>
        <div class="foot">
          <div class="btn fb"><svg width="14" height="14"><use href="#undoorange"/></svg></div>
          <div class="btn fb"><svg width="14" height="14"><use href="#redogreen"/></svg></div>
          <i class="cb on"></i><span class="live">Atualização ao vivo</span>
          <div class="btn apply"><svg width="16" height="16" viewBox="0 0 16 16"><circle cx="8" cy="8" r="8" fill="#138a2a"/><path d="M4.500 8l2.500 2.500 4.500-4.500" fill="none" stroke="#fff" stroke-width="1.600"/></svg><span>Apply</span></div>
        </div>
      </div>
    </div>
  </aside>
</main>

<footer class="status">
  <div class="inp locator"><svg width="13" height="13" viewBox="0 0 13 13"><circle cx="5.500" cy="5.500" r="4.500" fill="none" stroke="#777" stroke-width="1.200"/><path d="M9 9l3.500 3.500" stroke="#777" stroke-width="1.500"/></svg><em>Escreva para localizar (Ctrl+K)</em></div>
  <div class="progress"></div>
  <span class="st coord">Coordenada</span>
  <div class="inp xy">627613,7534951</div>
  <svg class="mouse" viewBox="0 0 16 16"><path d="M2 2l9 9M5 1c3 0 7 5 7 8M1 5c0 3 4 7 8 7" fill="none" stroke="#222" stroke-width="1.700"/><path d="M9 7c3-1 5 2 4.500 5-1 3-4 3-6 2-1.500-2-.5-6 1.500-7z" fill="#ddd" stroke="#222"/><path d="M12 4l3-3M13 6l2-1" stroke="#222"/></svg>
  <span class="st esc">Escala</span>
  <div class="inp scale"><span>1:570891</span><i class="sdd"><i class="car"></i></i></div>
  <svg class="lock" viewBox="0 0 12 16"><path d="M3 8v-3.500a3 3 0 0 1 6 0v3.500" fill="none" stroke="#777" stroke-width="1.800"/><rect x=".5" y="7" width="11" height="8.500" rx="1" fill="#5b5b5b"/></svg>
  <span class="st lupa">Lupa</span>
  <div class="inp spin mag"><span>100%</span><i class="steps"></i></div>
  <span class="st rot">Rotação</span>
  <div class="inp spin deg"><span>0.0 °</span><i class="steps"></i></div>
  <i class="cb on"></i><span class="st rend">Renderizar</span>
  <svg class="crs" viewBox="0 0 16 16"><path d="M3 2h10l3 6-3 6h-10l-3-6z" fill="#999"/><circle cx="8" cy="8" r="6.500" fill="#aaa" stroke="#555"/><path d="M8 1v14M1 8h14M2.500 4.500h11M2.500 11.500h11M8 1.500c-4 4-4 9 0 13M8 1.500c4 4 4 9 0 13" fill="none" stroke="#555" stroke-width=".9"/></svg>
  <span class="st epsg">EPSG:31983</span>
  <svg class="bubble" viewBox="0 0 16 16"><path d="M8 1c4.500 0 7.500 2.500 7.500 6 0 2-1 3.500-2.500 4.500l1 3.500-4-2.300c-5 .8-9.500-1.700-9.500-5.700 0-3.500 3-6 7.500-6z" fill="#5b5b5b"/><g fill="#fff"><circle cx="4.500" cy="7" r="1"/><circle cx="8" cy="7" r="1"/><circle cx="11.500" cy="7" r="1"/></g></svg>
</footer>

<div class="menu raster-menu">
  <div class="item"><svg class="s"><use href="#calc"/></svg><span>Calculadora Raster...</span></div>
  <div class="item"><i class="s"></i><span>Alinhar Imagens (Rasters)...</span></div>
  <div class="item"><svg class="s"><use href="#georef"/></svg><span>Georreferenciador…</span></div>
  <div class="item"><i class="s"></i><span>Análise</span><i class="tri"></i></div>
  <div class="item"><i class="s"></i><span>Projeções</span><i class="tri"></i></div>
  <div class="item"><i class="s"></i><span>Miscelânea</span><i class="tri"></i></div>
  <div class="item"><i class="s"></i><span>Extrair</span><i class="tri"></i></div>
  <div class="item hl"><i class="s"></i><span>Converter</span><i class="tri"></i></div>
</div>
<div class="menu sub-menu">
  <div class="item"><svg class="s"><use href="#pct"/></svg><span>PCT para RGB…</span></div>
  <div class="item hl"><svg class="s"><use href="#polyg"/></svg><span>Raster para vetor (poligonizar)…</span></div>
  <div class="item"><svg class="s"><use href="#rasterize"/></svg><span>Converter vetor para raster (rasterizar)…</span></div>
  <div class="item"><svg class="s"><use href="#rgb"/></svg><span>RGB para PCT…</span></div>
  <div class="item"><svg class="s"><use href="#transl"/></svg><span>Converter ( converter o formato )…</span></div>
</div>
<script src="map.js"></script>
</body>
</html>
```

FILE: styles.css
```css
* { box-sizing: border-box; }
body { margin: 0; width: 1600px; height: 873px; overflow: hidden; display: flex; flex-direction: column; background: #efefef; color: #000; font: 14.5px/19px "Open Sans", "Noto Sans", sans-serif; letter-spacing: 0; position: relative; white-space: nowrap; }
i { font-style: normal; display: block; flex: none; }
svg { flex: none; display: block; }
.defs { position: absolute; }
u { text-decoration: underline; text-decoration-thickness: 2px; text-underline-offset: 2px; text-decoration-skip-ink: none; }

.titlebar { height: 37px; background: #2c2c2c; border-top: 1px solid #3c3c3c; display: flex; align-items: center; justify-content: flex-end; position: relative; flex: none; }
.title { flex: 1; text-align: center; color: #fff; font-weight: bold; margin-right: -92px; letter-spacing: .2px; }
.winbtns { display: flex; align-items: center; gap: 24px; margin-right: 9px; }
.close { margin-left: -4px; }

.menubar { height: 22px; border-bottom: 1px solid #c9c9c9; display: flex; padding-left: 10px; line-height: 21px; flex: none; letter-spacing: -.08px; }
.mi.active { width: 51px; background: #308cc6; color: #fff; padding-left: 4px; }
.mi.first { padding-left: 11px; width: 122px; }
.w65 { width: 65px; } .w55 { width: 55px; } .w51 { width: 51px; } .w69 { width: 69px; } .w112 { width: 112px; } .w118 { width: 118px; } .w48 { width: 48px; }
.w46 { width: 46px; } .w56 { width: 56px; } .w81 { width: 81px; }

.toolbar { height: 39px; border-bottom: 1px solid #b4b4b4; background: linear-gradient(#f9f9f9, #eee); display: flex; align-items: center; flex: none; }
.toolbar.last { height: 38px; }
.tb { width: 33px; height: 24px; padding: 0 4.5px; }
.pressed { width: 33px; height: 31px; border: 1px solid #a5a5a5; border-radius: 3px; background: #dadada; display: flex; align-items: center; justify-content: center; flex: none; }
.off { opacity: .35; }
.grip { width: 5px; height: 17px; margin: 0 3px 0 5px; background: radial-gradient(circle at 1px 1px, #b0b0b0 .8px, transparent 1px) 0 0 / 3px 3px; }
.g2 { margin-left: 8px; }
.g3 { margin-left: 9px; }
.g4 { margin-left: 9px; }
.gap280 { width: 280px; }
.gap294 { width: 290px; }
.sep { width: 7px; height: 20px; border-left: 1px solid #ccc; margin-left: 1px; }
.dd { width: 12px; height: 5px; background: #555; clip-path: polygon(2px 0, 10px 0, 6px 5px); }

.main { display: flex; height: 667px; flex: none; }
.left { width: 460px; flex: none; display: flex; flex-direction: column; }
.docktitle { height: 22px; display: flex; align-items: center; padding: 0 8px 1px 4px; gap: 3px; flex: none; }
.docktitle span { flex: 1; }
.db { width: 11px; height: 11px; }
.s { width: 16px; height: 16px; }
.docktools { height: 29px; display: flex; align-items: center; gap: 9px; padding: 0 0 3px 8px; flex: none; }
.docktools.layers { padding: 0 0 3px 4px; gap: 9px; }
.pressed.small { width: 24px; height: 23px; margin-right: -4px; }
.layers .dd { margin: 0 -3px 0 -6px; }
.treebox { width: 454px; border: 1px solid #b4b4b4; background: #fff; display: flex; flex: none; overflow: hidden; }
.nav { height: 185px; }
.lay { height: 375px; }
.tree { flex: 1; overflow: hidden; }
.row { height: 19px; display: flex; align-items: center; padding-left: 6px; }
.row .s { margin: 0 6px 0 8px; }
.row.child { padding-left: 26px; }
.tri { width: 9px; height: 8px; background: #555; clip-path: polygon(2px 0, 6px 4px, 2px 8px); }
.tri.down { clip-path: polygon(0 2px, 8px 2px, 4px 6px); }
.none { visibility: hidden; }
.cb { width: 14px; height: 14px; background: #fff; border: 1px solid #b0b0b0; position: relative; }
.cb.on::after { content: ""; position: absolute; left: 4px; top: 1px; width: 4px; height: 8px; border: solid #000; border-width: 0 2px 2px 0; transform: rotate(35deg); }
.lr .cb { margin-left: 8px; }
.lr .s { margin: 0 6px; }
.lr b { letter-spacing: .15px; }
.sw { width: 16px; height: 16px; }
.lr .sw { margin: 0 6px; }
.outline { border: 1px solid #f98a8a; background: #fff; }
.leg { padding-left: 43px; gap: 6.5px; }
.leg .sw { margin-bottom: 1px; }
.sel { background: #308cc6; color: #fff; }
.sel .tri { background: #14486d; }
.lr .ul { text-decoration: underline; text-underline-offset: 3px; text-decoration-skip-ink: none; letter-spacing: .1px; }
.lr.dim b { color: #828282; font-style: italic; letter-spacing: .46px; padding-left: 1px; }
.c-mag { background: #d01c8b; } .c-pink { background: #f1b6da; } .c-wht { background: #f7f7f7; } .c-lgr { background: #b8e186; } .c-grn { background: #4dac26; }
.c-br1 { background: #a6611a; } .c-br2 { background: #dfc27d; } .c-gry { background: #f5f5f5; } .c-tl1 { background: #80cdc1; } .c-tl2 { background: #018571; }
.c-br3 { background: #cda25c; } .c-br4 { background: #e8d4a7; } .c-tl3 { background: #a7dbd3; } .c-tl4 { background: #57b4a7; }
.splitter { height: 5px; flex: none; background: radial-gradient(circle at 1px 1px, #bbb .6px, transparent .9px) 220px 1px / 3px 4px repeat-x; clip-path: inset(0 222px 0 219px); }

.scroll { width: 15px; border-left: 1px solid #b4b4b4; display: flex; flex-direction: column; flex: none; }
.sb { height: 14px; background: #fafafa; }
.sb.up { border-bottom: 1px solid #b4b4b4; }
.sb.dn { border-top: 1px solid #b4b4b4; }
.sb::after { content: ""; display: block; width: 8px; height: 4px; margin: 4px 3px; background: #555; clip-path: polygon(0 0, 8px 0, 4px 4px); }
.sb.up::after { clip-path: polygon(0 4px, 8px 4px, 4px 0); }
.thumb { background: linear-gradient(90deg, #fff, #efefef); border-bottom: 1px solid #b4b4b4; }
.h59 { height: 59px; } .h189 { height: 189px; } .h283 { height: 284px; }
.trough { flex: 1; background: #e3e3e3; }

.mapwrap { width: 500px; margin-top: 1px; border: 1px solid #b4b4b4; background: #fff; flex: none; }
.map { width: 498px; height: 664px; }

.right { width: 640px; flex: none; display: flex; flex-direction: column; }
.right .docktitle { height: 23px; padding: 0 1px 2px 10px; letter-spacing: .05px; }
.right .db { margin-right: 1px; }
.combo, .btn { border: 1px solid #aaa; border-radius: 3px; background: linear-gradient(#fdfdfd, #ededed); display: flex; align-items: center; height: 25px; padding: 0 7px 0 5px; }
.combo span { flex: 1; }
.car { width: 8px; height: 5px; background: #555; clip-path: polygon(0 0, 8px 0, 4px 5px); }
.layercombo { margin: 0 3px 0 9px; flex: none; padding-left: 6px; gap: 2px; letter-spacing: .18px; }
.stylebody { display: flex; flex: 1; min-height: 0; margin: 6px 3px 0 9px; }
.dark { width: 38px; height: 611px; background: #5d5d5d; padding: 134px 0 0 6px; flex: none; }
.stylecol { flex: 1; display: flex; flex-direction: column; }
.scrollrow { height: 579px; display: flex; flex: none; overflow: hidden; }
.form { flex: 1; padding-left: 18px; }
.scrollrow .scroll { height: 579px; }
.c1 { margin: 9px 9px 0 -8px; }
.c1 span { padding-left: 120px; margin-left: 3px; }
.c2 { margin: 9px 12px 0 0; }
.c2 span { padding-left: 121px; }
.minmax { display: flex; margin: 6px 12px 0 0; height: 25px; align-items: center; }
.inp { border: 1px solid #aaa; border-radius: 3px; background: #fff; height: 25px; display: flex; align-items: center; padding: 0 4px; }
.min { width: 269px; }
.maxl { width: 135px; padding-left: 6px; }
.max { width: 142px; padding-left: 3px; letter-spacing: .1px; }
.heading { font-weight: bold; padding-left: 147px; height: 38px; line-height: 31px; }
.fr { display: flex; align-items: center; margin-right: 15px; height: 25px; }
.fr label { width: 185px; white-space: normal; line-height: 17px; padding-right: 50px; }
.fr .combo, .fr .inp { flex: 1; }
.f1 label { padding-right: 0; } .f2 label { padding-right: 0; }
.f2 { height: 28px; margin-top: 6px; }
.ramp { flex: 1; height: 28px; border: 1px solid #aaa; border-radius: 3px; padding: 5px 4px; background: #fafafa; }
.ramp i { height: 16px; background: linear-gradient(90deg, #d01c8b, #f1b6da 25%, #f7f7f7 50%, #b8e186 75%, #4dac26); }
.rampdd { width: 12px; height: 28px; border: 1px solid #aaa; border-radius: 3px; display: flex; align-items: center; justify-content: center; background: #fafafa; }
.f3 { margin-top: 10px; }
.f4 { margin-top: 12px; height: 24px; }
.spin { padding-right: 0; height: 24px; }
.spin span { flex: 1; }
.clr { width: 13px; height: 10px; margin-right: 11px; }
.steps { width: 14px; height: 100%; border-left: 1px solid #aaa; display: flex; flex-direction: column; justify-content: center; gap: 5px; align-items: center; }
.steps::before, .steps::after { content: ""; width: 8px; height: 4px; background: #555; clip-path: polygon(0 4px, 8px 4px, 4px 0); }
.steps::after { clip-path: polygon(0 0, 8px 0, 4px 4px); }
.table { margin: 7px 15px 0 0; height: 251px; border: 1px solid #b4b4b4; background: #fff; }
.th { height: 21px; border-bottom: 1px solid #b4b4b4; background: linear-gradient(#fdfdfd, #ececec); display: flex; line-height: 21px; }
.th span { padding-left: 2px; }
.t1 { width: 100px; border-right: 1px solid #c8c8c8; } .t2 { width: 59px; border-right: 1px solid #c8c8c8; }
.tr { height: 38px; display: flex; align-items: center; letter-spacing: .05px; }
.v { width: 111px; padding-left: 23px; }
.chipc { width: 36px; height: 36px; border-radius: 5px; }
.l { color: #a3a3a3; padding-left: 15px; }
.moderow { display: flex; align-items: center; margin: 5px 15px 0 0; height: 26px; }
.ml { width: 46px; } .mode { width: 128px; }
.cl { margin-left: auto; width: 56px; letter-spacing: -.2px; }
.cls { width: 77px; }
.btnrow { display: flex; gap: 6px; margin-top: 7px; align-items: flex-start; }
.classify { width: 80px; height: 30px; padding: 0 4px 6px; letter-spacing: -.1px; }
.ib { width: 28px; height: 28px; padding: 0; justify-content: center; margin-top: 1px; }
.ib svg { margin-bottom: 5px; }
.tint { filter: hue-rotate(95deg) saturate(.6); }
.foot { display: flex; height: 34px; align-items: center; padding: 1px 0 0 3px; }
.fb { width: 24px; height: 24px; padding: 0; justify-content: center; margin-right: 6px; }
.foot .cb { margin: 0 5px 0 286px; }
.live { width: 142px; letter-spacing: .1px; }
.apply { width: 80px; margin-left: auto; padding: 0 0 0 10px; }

.status { flex: 1; display: flex; align-items: center; padding-left: 4px; font-size: 12.5px; letter-spacing: -.35px; }
.locator { width: 360px; padding-left: 8px; gap: 9px; font-size: 14.5px; color: #b9b9b9; margin-right: 177px; letter-spacing: .15px; }
.progress { width: 150px; height: 17px; border: 1px solid #2a6c9b; border-radius: 2px; background: repeating-linear-gradient(125deg, transparent 0 15px, rgba(20,70,120,.1) 15px 30px), linear-gradient(#42aaf0, #309ae0); }
.coord { margin-left: 14px; width: 70px; letter-spacing: -.55px; }
.xy { width: 110px; justify-content: center; height: 24px; letter-spacing: -.1px; }
.mouse { width: 16px; height: 16px; margin-left: 4px; }
.esc { margin-left: 13px; width: 37px; }
.scale { width: 96px; padding-right: 0; }
.scale span { flex: 1; }
.sdd { width: 20px; height: 100%; border-left: 1px solid #aaa; display: flex; align-items: center; justify-content: center; }
.lock { width: 12px; height: 16px; margin-left: 13px; }
.lupa { margin-left: 10px; width: 29px; }
.mag { width: 98px; }
.rot { margin-left: 10px; width: 54px; }
.deg { width: 93px; margin-right: 6px; }
.rend { margin-left: 6px; width: 75px; }
.crs { width: 15px; height: 15px; }
.epsg { margin-left: 3px; width: 89px; letter-spacing: -.5px; }
.bubble { width: 16px; height: 16px; }

.menu { position: absolute; border: 1px solid #929292; background: #fff; box-shadow: 1px 1px 2px rgba(0,0,0,.2); letter-spacing: .05px; }
.raster-menu { left: 528px; top: 59px; width: 282px; height: 200px; }
.sub-menu { left: 809px; top: 234px; width: 375px; height: 125px; letter-spacing: .12px; }
.item { height: 25px; display: flex; align-items: center; padding: 0 2px 0 6px; gap: 5px; }
.item span { flex: 1; }
.item:first-child { height: 24px; }
.item.hl { background: #308cc6; color: #fff; margin: 0 -1px; padding: 0 3px 0 7px; box-shadow: inset 0 0 0 1px #1f6ea5; }
.item.hl .tri { background: #b5d6ec; }
```

FILE: map.js
```js
// Study-area boundary and population cells, in map units of a third of a pixel.
const mainland = "56,365 72,362 78,352 90,350 102,342 118,346 148,334 146,318 158,306 180,308 200,296 215,296 228,285 240,291 262,282 300,277 335,281 345,270 367,261 390,268 408,276 440,272 466,266 471,270 481,224 540,204 600,194 655,182 682,176 697,208 746,249 790,234 810,224 825,208 835,190 860,184 880,175 900,171 925,157 945,150 1000,151 1055,145 1068,155 1087,165 1120,163 1130,182 1140,202 1165,225 1188,238 1196,268 1204,290 1215,302 1235,310 1256,304 1266,306 1254,322 1240,335 1250,361 1280,350 1320,354 1346,378 1352,402 1328,406 1334,430 1328,464 1310,468 1330,482 1350,490 1352,506 1320,520 1296,540 1290,556 1298,560 1286,566 1250,560 1215,561 1200,575 1180,588 1120,586 1092,606 1090,620 1060,620 1020,614 960,607 900,610 830,618 770,630 725,645 720,652 690,652 660,666 640,680 638,686 590,690 580,702 556,712 548,742 515,744 520,712 528,700 510,685 480,665 455,650 452,630 430,622 410,600 390,592 346,582 320,545 300,535 285,540 272,552 245,545 238,525 212,510 212,495 180,470 140,443 110,428 90,412 70,410 56,396 68,385 56,365";
const island = "1138,168 1150,145 1175,133 1210,126 1218,112 1232,112 1245,122 1258,136 1292,140 1296,122 1320,110 1338,98 1350,90 1362,92 1364,118 1345,130 1325,145 1318,160 1322,190 1336,205 1325,214 1306,218 1290,192 1250,186 1225,185 1205,200 1193,220 1175,212 1155,195 1138,168";
const details = [
  "440,647 380,655 316,670 314,693 380,689 440,689 490,700 520,714",
  "445,640 452,660 470,672 492,678 496,665 480,655 462,648 445,640",
  "440,646 448,664 475,676 500,684 524,700 520,716",
  "498,686 520,692 528,706 518,716",
  "1188,232 1205,240 1208,262 1200,275 1212,290 1230,300 1246,296 1252,280 1238,274 1222,276 1208,258 1222,246 1228,238 1212,228 1204,236",
  "1190,240 1198,280 1218,304 1240,308",
  "1330,488 1345,462 1366,458 1360,478 1370,482 1352,486 1340,478",
  "1320,356 1338,366 1324,374 1346,384 1340,400",
  "712,650 718,662 722,652",
  "626,722 632,712 638,720 626,722",
  "1266,742 1276,736 1284,744 1276,752 1268,748 1266,742",
  "1370,722 1382,734 1374,732 1370,722",
  "1252,674 1270,668 1284,658 1278,650",
  "1452,42 1470,40 1468,56 1474,70 1462,82 1450,80 1458,62 1452,42",
  "1430,150 1440,146"
];
const specks = "1422,33 1440,54 1446,80 1472,72 1398,100 1398,110 1466,100 1338,78 1356,88 1366,92 1470,132 1476,126 1430,144 1432,158 1456,142 1450,156 1326,232 1372,124 1364,140 1348,178 1346,196 1340,206 1332,216 1322,332 1256,344 1278,342 1304,340 1378,446 1372,510 1304,636 1260,648 1272,656 1112,652 1062,660 1050,664 1032,668 1042,686 638,698 516,758 530,756 508,740 330,576 240,546 1160,200 1350,368 1308,112 1344,104 1358,132 1330,98 1376,136";

let seed = 7;
const rnd = () => (seed = (seed * 16807) % 2147483647) / 2147483647;

// Adds small irregular steps to long coast segments.
function rough(text, amp) {
  const p = text.split(" ").map(s => s.split(",").map(Number));
  let d = "M" + p[0];
  for (let k = 1; k < p.length; k++) {
    const [ax, ay] = p[k - 1], [bx, by] = p[k];
    const steps = Math.max(1, Math.round(Math.hypot(bx - ax, by - ay) / 9));
    for (let j = 1; j < steps; j++) {
      const t = j / steps;
      d += ` L${(ax + (bx - ax) * t + (rnd() - .5) * amp).toFixed(1)},${(ay + (by - ay) * t + (rnd() - .5) * amp).toFixed(1)}`;
    }
    d += ` L${bx},${by}`;
  }
  return d;
}

document.getElementById("landshape").setAttribute("d", "M" + mainland.replace(/ /g, "L") + "Z M" + island.replace(/ /g, "L") + "Z");

let coast = `<path d="${rough(mainland, 3)}"/><path d="${rough(island, 5)}"/>`;
for (const d of details) coast += `<path d="${rough(d, 4)}"/>`;
for (const s of specks.split(" ")) {
  const [x, y] = s.split(",").map(Number);
  coast += `<path d="M${x - 2},${y}l3,-2l2,3l-3,2z"/>`;
}
document.getElementById("coast").innerHTML = coast;

const ink = { g: "#b8e186", l: "#dcefc6", w: "#efe9ee", p: "#f1b6da", q: "#f0d6e6", k: "#e075b7", m: "#d01c8b" };
// centre x, y, radius x, y, cell count, colour mix
const clusters = [
  [1000, 240, 165, 95, 2100, "ggggglw"], [1090, 210, 80, 60, 450, "ggggp"], [880, 205, 55, 35, 260, "gglw"],
  [1060, 330, 150, 75, 1250, "ggggglp"], [950, 320, 50, 60, 330, "gglw"], [1180, 400, 85, 60, 760, "ggggl"],
  [1270, 420, 65, 60, 420, "gggl"], [1180, 320, 70, 70, 450, "gppkl"], [1170, 270, 30, 50, 120, "kpm"],
  [1300, 500, 60, 60, 230, "gggl"], [1230, 530, 60, 35, 110, "gglp"], [1120, 182, 14, 8, 40, "m"],
  [1230, 320, 45, 40, 80, "mkp"], [1310, 380, 45, 30, 90, "mkp"], [1050, 160, 50, 15, 60, "pkg"],
  [985, 156, 20, 8, 14, "m"], [1290, 160, 50, 35, 330, "ggglw"], [1215, 170, 25, 40, 40, "kgp"], [1330, 120, 30, 20, 40, "kgp"],
  [740, 300, 95, 50, 560, "gglwppq"], [800, 325, 60, 35, 400, "gggl"], [735, 310, 16, 8, 40, "kmp"], [800, 312, 60, 5, 40, "kp"],
  [715, 240, 50, 30, 110, "gpk"], [870, 278, 45, 18, 34, "m"], [690, 345, 30, 14, 50, "g"],
  [620, 310, 50, 50, 150, "lqpw"], [570, 265, 70, 30, 110, "qpk"], [520, 320, 90, 40, 330, "lqqpw"],
  [540, 370, 50, 35, 240, "kppqw"], [590, 400, 60, 30, 190, "kpqgl"], [460, 350, 60, 40, 200, "gglqp"],
  [430, 400, 45, 25, 160, "mkgpgl"], [350, 410, 80, 40, 300, "ggplw"], [280, 410, 40, 50, 170, "gglp"],
  [500, 440, 60, 30, 150, "pqkw"], [500, 465, 50, 20, 75, "mkp"], [440, 490, 35, 35, 120, "kpqm"],
  [330, 310, 45, 25, 45, "kmp"], [390, 310, 40, 25, 28, "mk"], [340, 350, 80, 25, 50, "kpg"], [165, 355, 36, 28, 34, "m"],
  [130, 390, 25, 12, 8, "m"], [215, 340, 25, 18, 22, "lg"], [330, 480, 50, 35, 90, "mkpg"], [260, 510, 35, 35, 120, "glq"],
  [340, 525, 45, 22, 100, "kpq"], [390, 570, 35, 18, 50, "kp"], [520, 540, 80, 60, 45, "kpm"], [570, 590, 30, 50, 45, "kp"],
  [530, 630, 15, 30, 14, "kp"], [520, 240, 30, 20, 10, "m"], [560, 220, 30, 25, 8, "k"],
  [660, 530, 45, 40, 70, "kpq"], [720, 550, 60, 30, 60, "kp"], [640, 630, 40, 18, 50, "kp"], [710, 630, 40, 22, 100, "ggpl"],
  [790, 600, 80, 16, 110, "kpgm"], [870, 505, 38, 25, 50, "m"], [905, 560, 28, 40, 50, "mk"], [850, 580, 60, 14, 55, "kp"],
  [830, 400, 18, 22, 20, "kp"], [910, 400, 80, 28, 190, "qplg"], [930, 450, 70, 40, 330, "gglqp"], [980, 470, 40, 40, 150, "ggpk"],
  [1000, 510, 50, 25, 55, "gpk"], [880, 330, 40, 25, 40, "qp"], [1100, 520, 30, 20, 10, "m"], [990, 585, 45, 14, 60, "mkg"],
  [1060, 570, 40, 30, 65, "kpq"], [1050, 605, 45, 8, 40, "gp"], [1120, 578, 30, 8, 16, "gp"], [950, 595, 40, 12, 30, "gk"],
  [750, 410, 90, 30, 8, "q"], [430, 290, 14, 12, 6, "m"], [225, 425, 10, 12, 4, "m"], [670, 400, 40, 40, 10, "q"]
];
// Blocks of varying settlement density keep the cells in irregular patches.
const density = [];
for (let k = 0; k < 120 * 60; k++) density.push(.12 + Math.pow(rnd(), 1.5) * .88);
const dens = (x, y) => density[Math.floor(y / 14) * 120 + Math.floor(x / 14)] || .4;
const gauss = () => rnd() + rnd() + rnd() - 1.5;
const marks = {};
for (const [cx, cy, rx, ry, n, mix] of clusters) {
  let left = n, tries = n * 8;
  while (left > 0 && tries-- > 0) {
    const x = Math.round((cx + gauss() * rx * 1.15) / 3) * 3, y = Math.round((cy + gauss() * ry * 1.15) / 3) * 3;
    if (rnd() > dens(x, y)) continue;
    const c = mix[Math.floor(rnd() * mix.length)];
    marks[c] = (marks[c] || "") + `M${x} ${y}h3v3h-3z`;
    left--;
  }
}
document.getElementById("cells").innerHTML = Object.keys(marks).map(c => `<path fill="${ink[c]}" d="${marks[c]}"/>`).join("");
```
